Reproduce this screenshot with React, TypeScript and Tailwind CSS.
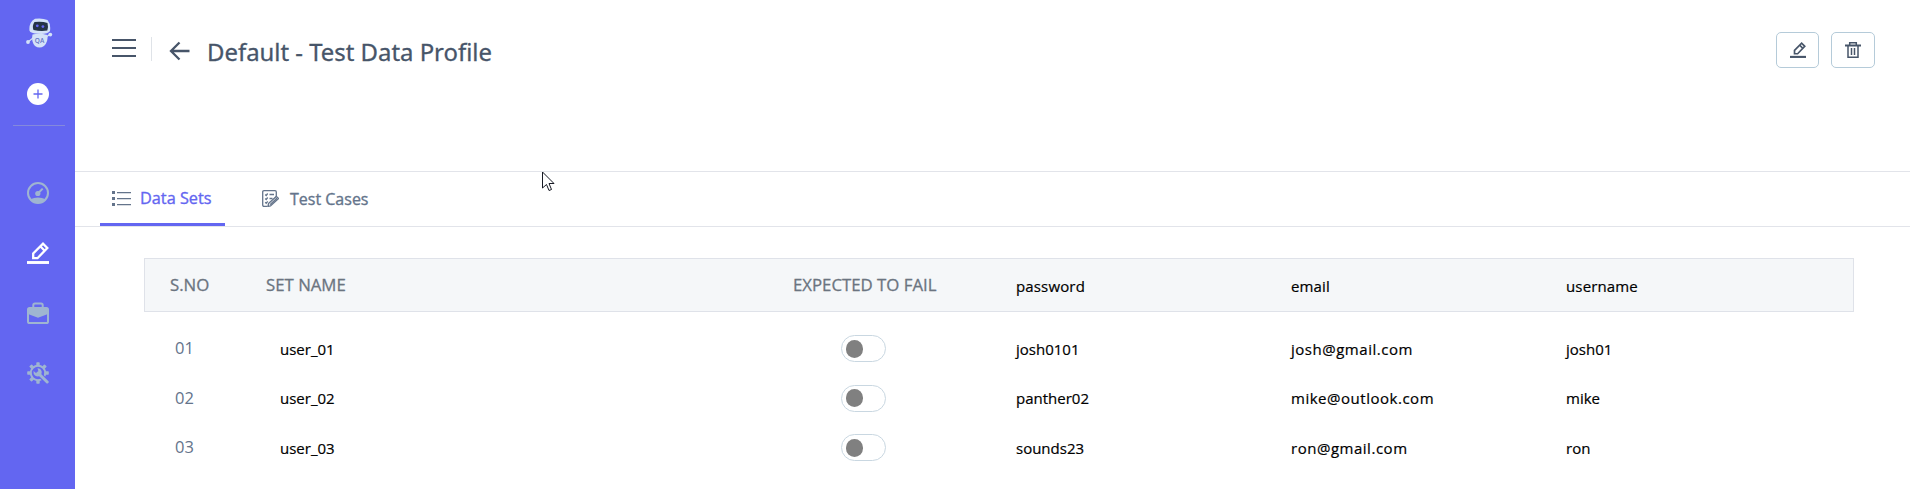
import React from 'react';

const columns = ['password', 'email', 'username'];
const rows = [
  { no: '01', name: 'user_01', values: ['josh0101', 'josh@gmail.com', 'josh01'] },
  { no: '02', name: 'user_02', values: ['panther02', 'mike@outlook.com', 'mike'] },
  { no: '03', name: 'user_03', values: ['sounds23', 'ron@gmail.com', 'ron'] },
];

const grid = 'grid grid-cols-[96px_527px_223px_275px_275px_1fr]';
const heading = 'text-[16.8px] text-[#6b7480] [-webkit-text-stroke:0.3px]';

function Robot() {
  return (
    <svg width="28" height="32" viewBox="0 0 28 32">
      <g fill="#d3e2f8">
        <path d="M8 20L3 24M21 19L25 16.500" stroke="#d3e2f8" strokeWidth="1.100" />
        <circle cx="3" cy="24" r="1.900" />
        <circle cx="25.300" cy="16.600" r="1.900" />
        <path d="M7.500 16.500Q14.500 15 22.500 17Q23.300 24 19 28Q14.500 31 10 28Q6 23.500 7.500 16.500Z" />
        <path d="M10 .8Q17-.3 22.500 2Q26 6 25 13Q22.500 16.600 13 15.800Q5.500 15.500 4.500 12.800Q3.600 4.500 10 .8Z" />
      </g>
      <path d="M9.500 4Q17 3 22.500 5Q23.600 9 22.300 12.500Q16 13.700 8.500 12Q6.800 8 9.500 4Z" fill="#243345" />
      <circle cx="12.300" cy="7.800" r="1.400" fill="#6366f1" />
      <circle cx="17.900" cy="8.600" r="1.400" fill="#6366f1" />
      <text x="14.500" y="25" textAnchor="middle" fontSize="6.500" fontFamily="Open Sans, sans-serif" fontWeight="600" fill="#6474c4">QA</text>
    </svg>
  );
}

function Pencil({ size }: { size: number }) {
  return (
    <svg width={size} height={size} viewBox="0 0 22 22" fill="none" stroke="currentColor">
      <path d="M6.200 16.200V11.500L16 1.700L20.300 6L10.500 16.200Z" strokeWidth="2.300" />
      <path d="M13.500 4.500L17.700 8.700" strokeWidth="2.300" />
      <path d="M0 20.500H22" strokeWidth="2.900" />
    </svg>
  );
}

function Gauge() {
  return (
    <svg width="22" height="22" viewBox="0 0 22 22">
      <circle cx="11" cy="11" r="10" fill="none" stroke="currentColor" strokeWidth="2" />
      <path d="M3.300 17.200Q11 13.800 18.700 17.200Q15 21 11 21Q7 21 3.300 17.200Z" fill="currentColor" />
      <circle cx="10.800" cy="11.500" r="2.600" fill="currentColor" />
      <path d="M11 11.200L15.700 6.600" stroke="currentColor" strokeWidth="2" />
    </svg>
  );
}

function Briefcase() {
  return (
    <svg width="22" height="22" viewBox="0 0 22 22" fill="none" stroke="currentColor" strokeWidth="2">
      <path d="M6.300 6V3Q6.300 1.400 8 1.400H14Q15.700 1.400 15.700 3V6" />
      <rect x="1" y="6" width="20" height="15" rx="1.600" />
      <path d="M1 6H21V12L11 15.800L1 12Z" fill="currentColor" stroke="none" />
    </svg>
  );
}

function GearWrench() {
  const angles = [0, 45, 90, 135, 180, 225, 270, 315];
  return (
    <svg width="22" height="22" viewBox="0 0 22 22">
      <g fill="currentColor">
        {angles.map((a) => (
          <rect key={a} x="9.300" y=".2" width="3.400" height="4" rx=".7" transform={`rotate(${a} 11 11)`} />
        ))}
      </g>
      <circle cx="11" cy="11" r="7.200" fill="none" stroke="currentColor" strokeWidth="2" />
      <path d="M13 13L21 21" stroke="#6366f1" strokeWidth="5" />
      <path d="M11 11L20.200 20" stroke="currentColor" strokeWidth="3" strokeLinecap="round" />
      <path d="M10.500 6.300Q13.500 6 14.600 9Q15 11 14 13L13 14Q10.500 15 8.300 13.800Q6 12 6.500 9L9.300 11.200L11.400 9.300Z" fill="currentColor" />
    </svg>
  );
}

function Trash() {
  return (
    <svg width="16" height="16" viewBox="0 0 16 16" fill="none" stroke="currentColor" strokeWidth="1.500">
      <path d="M4.700 3V.8H11.300V3M3 4V15.200H13V4M6.500 6V13M9.500 6V13" />
      <path d="M0 3.500H16" strokeWidth="2" />
    </svg>
  );
}

function ListIcon() {
  return (
    <svg width="19" height="15" viewBox="0 0 19 15" fill="currentColor">
      <path d="M0 0h3v3H0zM0 6h3v3H0zM0 12h3v3H0zM5 1h14v1.200H5zM5 7h14v1.200H5zM5 13h14v1.200H5z" />
    </svg>
  );
}

function CaseIcon() {
  return (
    <svg width="17" height="17" viewBox="0 0 17 17" fill="none" stroke="currentColor" strokeWidth="1.300">
      <path d="M5.500 16.300H2Q.7 16.300.7 15V2Q.7.700 2 .700H13Q14.300.700 14.300 2V7" />
      <path d="M3.200 4.500l1 1 1.500-2M3.200 8.500l1 1 1.500-2M3.200 12.300l1 1 1.500-2M7.500 4.500H12M7.500 8.500H10.500" />
      <path d="M6.500 13.500L14.300 6.500L16.500 8.500L8.500 15.900L6 16.400ZM8 14.600L15.400 7.600" />
    </svg>
  );
}

function Toggle() {
  return (
    <button className="flex h-[27px] w-[45px] items-center rounded-full border border-[#c9d7e1] bg-white pl-1">
      <span className="h-[18px] w-[17px] rounded-full bg-[#808080]" />
    </button>
  );
}

function Sidebar() {
  return (
    <aside className="flex w-[75px] shrink-0 flex-col items-center bg-[#6366f1] text-[#9fb5d1]">
      <div className="mt-[18px] ml-[3px] h-8"><Robot /></div>
      <button className="mt-[33px] flex size-[22px] items-center justify-center rounded-full bg-white text-[#6366f1]">
        <svg width="10" height="10" viewBox="0 0 10 10" stroke="currentColor" strokeWidth="1.300"><path d="M5 .5V9.500M.5 5H9.500" /></svg>
      </button>
      <div className="mt-5 ml-[3px] h-px w-[52px] bg-[#8489dc]" />
      <nav className="mt-[56px] flex flex-col gap-[38px]">
        <Gauge />
        <span className="text-white"><Pencil size={22} /></span>
        <Briefcase />
        <GearWrench />
      </nav>
    </aside>
  );
}

export default function App() {
  return (
    <div className="relative flex h-[489px] w-[1910px] overflow-hidden bg-white font-['Open_Sans','Noto_Sans',sans-serif] text-[#475569]">
      <Sidebar />
      <main className="min-w-0 flex-1">
        <header className="flex h-[172px] items-start border-b border-[#e2e4ea] pl-[37px] pr-[35px]">
          <svg className="mt-[38px]" width="24" height="20" viewBox="0 0 24 20" fill="currentColor"><path d="M0 1h24v2H0zM0 9h24v2H0zM0 17h24v2H0z" /></svg>
          <div className="mt-[37px] ml-[15px] h-6 w-px bg-[#dfe3e8]" />
          <svg className="mt-[41px] ml-[17px]" width="21" height="20" viewBox="0 0 21 20" fill="none" stroke="currentColor" strokeWidth="2.300"><path d="M10.500 1.500L2 10L10.500 18.500M2 10H20.500" /></svg>
          <h1 className="mt-[33.500px] ml-[17px] whitespace-nowrap font-['Noto_Sans',sans-serif] text-[23.9px] leading-9 [-webkit-text-stroke:0.3px]">Default - Test Data Profile</h1>
          <div className="mt-8 ml-auto flex gap-3">
            <button className="flex h-9 w-[43px] items-center justify-center rounded-[5px] border border-[#b5cbd9]"><Pencil size={16} /></button>
            <button className="flex h-9 w-11 items-center justify-center rounded-[5px] border border-[#b5cbd9]"><Trash /></button>
          </div>
        </header>
        <div className="flex h-[55px] border-b border-[#e2e4ea] pl-[25px] text-[16.3px] text-[#64748b] [-webkit-text-stroke:0.35px]">
          <div className="flex w-[125px] items-center gap-[9px] border-b-[3px] border-[#6366f1] pt-0.5 pl-3">
            <ListIcon />
            <span className="whitespace-nowrap text-[#6366f1]">Data Sets</span>
          </div>
          <div className="ml-[37px] flex items-center gap-[11px] pt-0.5 pb-[3px]">
            <CaseIcon />
            <span className="text-[16px]">Test Cases</span>
          </div>
        </div>
        <section className="pt-[31px] pr-[56px] pl-[69px] text-[15px] text-black [-webkit-text-stroke:0.2px]">
          <div className={`${grid} h-[54px] items-center border border-[#dfe2e9] bg-[#f5f7f9] pl-[25px]`}>
            <span className={heading}>S.NO</span>
            <span className={heading}>SET NAME</span>
            <span className={heading}>EXPECTED TO FAIL</span>
            {columns.map((c) => <span key={c} className="pt-[3px] tracking-[0.15px]">{c}</span>)}
          </div>
          <div className="pt-3">
            {rows.map((r) => (
              <div key={r.no} className={`${grid} h-[49.500px] items-center pl-[26px]`}>
                <span className="pl-[5px] text-[16.500px] text-[#64748b] [-webkit-text-stroke:0]">{r.no}</span>
                <span className="pl-[14px]">{r.name}</span>
                <span className="pl-[48px]"><Toggle /></span>
                {r.values.map((v) => <span key={v} className={v.includes('@') ? 'tracking-[0.52px]' : ''}>{v}</span>)}
              </div>
            ))}
          </div>
        </section>
      </main>
      <svg className="absolute left-[542px] top-[171px]" width="13" height="21" viewBox="0 0 13 21" fill="white" stroke="#171a24"><path d="M.5 1V17L4.500 13.500L7 19.500L9.500 18.500L7 12.500H12Z" /></svg>
    </div>
  );
}
